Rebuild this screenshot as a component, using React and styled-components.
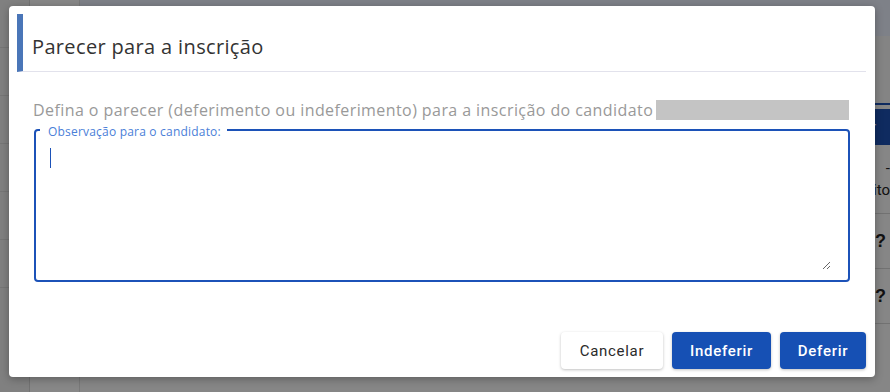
import React from "react";
import styled, { createGlobalStyle } from "styled-components";

const Global = createGlobalStyle`
  html, body { margin: 0; padding: 0; width: 890px; height: 392px; overflow: hidden; }
  body { font-family: "Open Sans", "Liberation Sans", sans-serif; background: #fff; }
  * { box-sizing: border-box; }
`;

const Page = styled.div`
  width: 890px;
  height: 392px;
  display: grid;
  grid-template-columns: 30px 50px 1fr;
  background: #f4f4f4;
  position: relative;
`;

const Rail = styled.div`
  background: #eaeaea;
  border-right: 1px solid #d0d0d0;
  display: flex;
  flex-direction: column;
`;

const RailItem = styled.div`
  height: 48px;
  border-bottom: 1px solid #d8d8d8;
`;

const Side = styled.div`
  background: #f6f6f6;
  border-right: 1px solid #dcdcdc;
`;

const Main = styled.div`
  display: flex;
  flex-direction: column;
`;

const TopBar = styled.div`
  height: 36px;
  background: #e6ecf8;
`;

const Band = styled.div`
  height: 69px;
  background: #f0f0f0;
  border-bottom: 2px solid #1d4fb0;
`;

const Content = styled.div`
  flex: 1;
  display: flex;
  flex-direction: column;
  align-items: flex-end;
  padding-top: 4px;
`;

const PageButton = styled.div`
  background: #1d4fb0;
  color: #fff;
  font-family: Roboto, sans-serif;
  font-size: 15px;
  height: 36px;
  display: flex;
  align-items: center;
  padding: 0 14px 0 4px;
`;

const HeadCell = styled.div`
  width: 100%;
  height: 69px;
  border-bottom: 1px solid #cfcfcf;
  display: flex;
  flex-direction: column;
  align-items: flex-end;
  justify-content: center;
  font-family: Roboto, sans-serif;
  font-size: 15px;
  color: #222;
  line-height: 22px;
`;

const Row = styled.div`
  width: 100%;
  height: 55px;
  border-bottom: 1px solid #cfcfcf;
  display: flex;
  align-items: center;
  justify-content: flex-end;
  padding-right: 4px;
  font-family: "Liberation Sans", sans-serif;
  font-weight: bold;
  font-size: 18px;
  color: #222;
`;

const Overlay = styled.div`
  position: absolute;
  inset: 0;
  background: rgba(0, 0, 0, 0.45);
  display: flex;
  padding: 6px 15px 15px 9px;
`;

const Modal = styled.div`
  flex: 1;
  background: #fff;
  border-radius: 4px;
  box-shadow: 0 2px 8px rgba(0, 0, 0, 0.3);
  display: flex;
  flex-direction: column;
  padding: 8px 9px 8px 8px;
`;

const Header = styled.div`
  height: 58px;
  display: flex;
  align-items: center;
  border-left: 6px solid #4a76b8;
  border-bottom: 1px solid #e2e2ec;
  padding-left: 9px;
  padding-top: 7px;
`;

const Title = styled.h2`
  margin: 0;
  font-family: "Open Sans", sans-serif;
  font-weight: 400;
  font-size: 20px;
  letter-spacing: 0.35px;
  color: #333;
`;

const Body = styled.div`
  display: flex;
  flex-direction: column;
  padding: 28px 16px 0 16px;
  flex: 1;
`;

const Lead = styled.p`
  margin: 0;
  display: flex;
  align-items: center;
  font-size: 16px;
  line-height: 20px;
  letter-spacing: 0.42px;
  color: #999;
  height: 20px;
  white-space: nowrap;
`;

const Redacted = styled.span`
  display: inline-block;
  width: 193px;
  height: 20px;
  background: #c4c4c4;
  margin-left: 3px;
`;

const Field = styled.fieldset`
  margin: 2px 0 0 1px;
  width: 816px;
  height: 160px;
  border: 2px solid #1c52b8;
  border-radius: 4px;
  padding: 0 17px 0 12px;
  position: relative;
`;

const Legend = styled.legend`
  font-size: 12px;
  letter-spacing: 0.2px;
  color: #4a80d8;
  padding: 4px 6px 0 8px;
  margin-left: -8px;
  line-height: 12px;
`;

const Area = styled.textarea`
  display: block;
  width: 100%;
  height: 132px;
  border: none;
  outline: none;
  resize: vertical;
  font-family: "Open Sans", sans-serif;
  font-size: 16px;
  padding: 2px 2px;
  margin: 0;
  caret-color: #1c52b8;
`;

const Caret = styled.span`
  position: absolute;
  left: 14px;
  top: 10px;
  width: 1px;
  height: 20px;
  background: #1c52b8;
  pointer-events: none;
`;

const Footer = styled.div`
  display: flex;
  justify-content: flex-end;
  gap: 9px;
`;

const Button = styled.button`
  height: 37px;
  width: ${(p) => p.$w}px;
  padding: 0;
  border: none;
  border-radius: 4px;
  font-family: Roboto, sans-serif;
  font-weight: ${(p) => (p.$primary ? 500 : 400)};
  font-size: 15px;
  letter-spacing: 0.7px;
  background: ${(p) => (p.$primary ? "#1650b4" : "#fff")};
  color: ${(p) => (p.$primary ? "#fff" : "#2a2a2a")};
  box-shadow: 0 1px 3px rgba(0, 0, 0, 0.25);
  cursor: pointer;
`;

export default function App() {
  return (
    <>
      <Global />
      <Page>
        <Rail>
          <RailItem />
          <RailItem />
          <RailItem />
          <RailItem />
          <RailItem />
          <RailItem />
        </Rail>
        <Side />
        <Main>
          <TopBar />
          <Band />
          <Content>
            <PageButton>Deferir</PageButton>
            <HeadCell>
              <span>-</span>
              <span>Requisito</span>
            </HeadCell>
            <Row>?</Row>
            <Row>?</Row>
          </Content>
        </Main>
        <Overlay>
          <Modal>
            <Header>
              <Title>Parecer para a inscrição</Title>
            </Header>
            <Body>
              <Lead>
                Defina o parecer (deferimento ou indeferimento) para a inscrição do candidato
                <Redacted />
              </Lead>
              <Field>
                <Legend>Observação para o candidato:</Legend>
                <Area />
                <Caret />
              </Field>
            </Body>
            <Footer>
              <Button $w={102}>Cancelar</Button>
              <Button $primary $w={99}>Indeferir</Button>
              <Button $primary $w={86}>Deferir</Button>
            </Footer>
          </Modal>
        </Overlay>
      </Page>
    </>
  );
}
